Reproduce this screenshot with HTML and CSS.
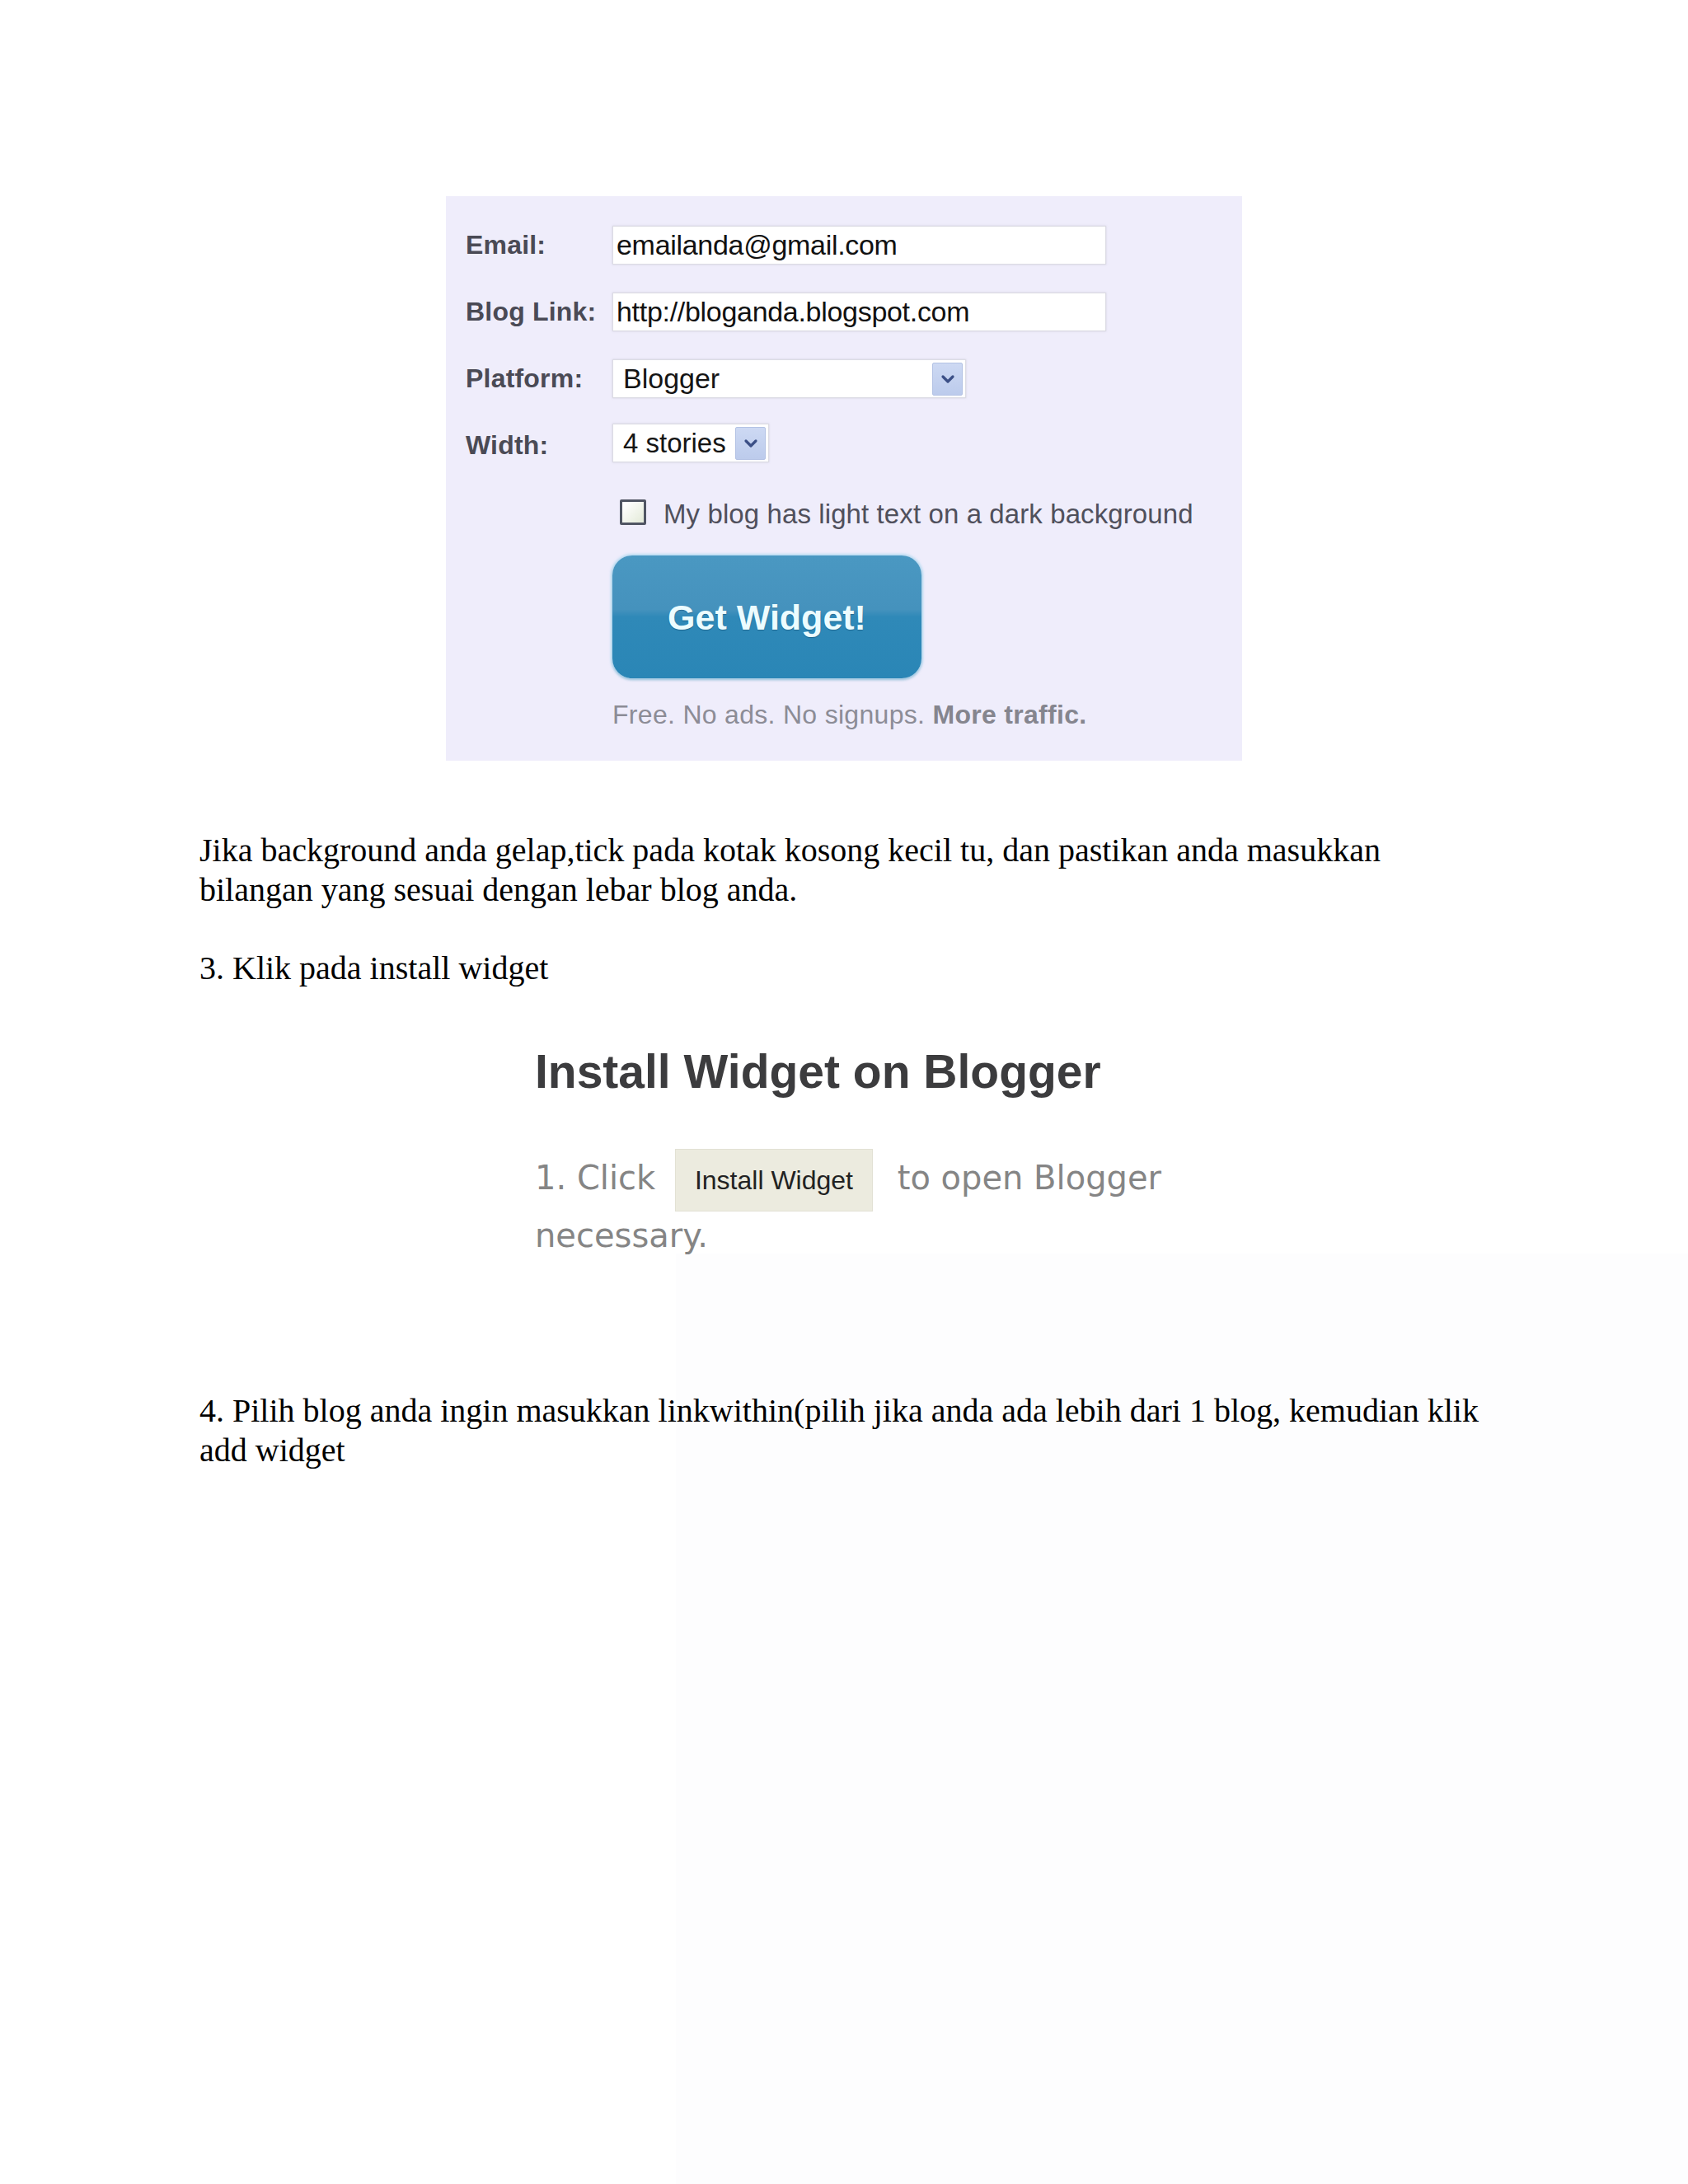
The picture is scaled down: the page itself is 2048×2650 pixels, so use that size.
FILE: index.html
```html
<!DOCTYPE html>
<html lang="id">
<head>
<meta charset="utf-8">
<title>Pasang LinkWithin</title>
<link rel="stylesheet" href="styles.css">
</head>
<body>
<div class="page">

  <figure class="shot shot-form">
    <div class="lw-form">
      <div class="row">
        <span class="label">Email:</span>
        <span class="field field-wide">emailanda@gmail.com</span>
      </div>
      <div class="row">
        <span class="label">Blog Link:</span>
        <span class="field field-wide">http://bloganda.blogspot.com</span>
      </div>
      <div class="row">
        <span class="label">Platform:</span>
        <span class="select select-platform">
          <span class="select-text">Blogger</span>
          <span class="select-arrow"><svg viewBox="0 0 20 20" width="20" height="20"><path d="M4 7 L10 13 L16 7" fill="none" stroke="#3b4f86" stroke-width="3.2" stroke-linecap="round" stroke-linejoin="round"/></svg></span>
        </span>
      </div>
      <div class="row">
        <span class="label">Width:</span>
        <span class="select select-width">
          <span class="select-text">4 stories</span>
          <span class="select-arrow"><svg viewBox="0 0 20 20" width="20" height="20"><path d="M4 7 L10 13 L16 7" fill="none" stroke="#3b4f86" stroke-width="3.2" stroke-linecap="round" stroke-linejoin="round"/></svg></span>
        </span>
      </div>
      <div class="row row-check">
        <span class="checkbox"></span>
        <span class="check-label">My blog has light text on a dark background</span>
      </div>
      <div class="row row-button">
        <span class="get-btn">Get Widget!</span>
      </div>
      <p class="tagline">Free. No ads. No signups. <b>More traffic.</b></p>
    </div>
  </figure>

  <p class="text">Jika background anda gelap,tick pada kotak kosong kecil tu, dan pastikan anda masukkan<br>bilangan yang sesuai dengan lebar blog anda.</p>

  <p class="text">3. Klik pada install widget</p>

  <figure class="shot shot-install">
    <h2 class="install-title">Install Widget on Blogger</h2>
    <p class="install-step">1. Click <span class="install-btn">Install Widget</span> to open Blogger<br>necessary.</p>
  </figure>

  <p class="text text-step4">4. Pilih blog anda ingin masukkan linkwithin(pilih jika anda ada lebih dari 1 blog, kemudian klik<br>add widget</p>

</div>
</body>
</html>
```

FILE: styles.css
```css
html, body {
  margin: 0;
  padding: 0;
  background: #ffffff;
}

.page {
  width: 2048px;
  min-height: 2650px;
  box-sizing: border-box;
  padding: 238px 242px 0 242px;
  font-family: "Liberation Serif", "Times New Roman", serif;
  color: #000;
  /* faint grey wash left over from the pasted screenshot */
  background:
    linear-gradient(#fdfdfe, #fdfdfe) no-repeat 820px 1521px / 1228px 1129px,
    #ffffff;
}

.shot {
  margin: 0;
}

/* ---------- LinkWithin sign-up form ---------- */
.shot-form {
  width: 966px;
  margin: 0 auto;
  background: #efedfb;
}

.lw-form {
  display: flex;
  flex-direction: column;
  padding: 36px 24px 36px 24px;
  font-family: "Liberation Sans", Arial, sans-serif;
}

.row {
  display: flex;
  align-items: center;
  height: 47px;
  margin-bottom: 34px;
}

.label {
  width: 178px;
  flex: none;
  font-weight: bold;
  font-size: 32px;
  color: #4a4a55;
  letter-spacing: 0.2px;
}

.field {
  box-sizing: border-box;
  height: 47px;
  display: flex;
  align-items: center;
  padding-left: 4px;
  background: #ffffff;
  border: 1px solid #dcdce4;
  box-shadow: 0 0 2px rgba(180, 180, 200, 0.6);
  font-size: 34px;
  color: #111;
  letter-spacing: -0.3px;
}

.field-wide {
  width: 599px;
}

.select {
  box-sizing: border-box;
  height: 47px;
  display: flex;
  align-items: center;
  justify-content: space-between;
  padding: 0 3px 0 12px;
  background: #ffffff;
  border: 1px solid #dcdce4;
  box-shadow: 0 0 2px rgba(180, 180, 200, 0.6);
}

.select-platform { width: 429px; }
.select-width { width: 190px; margin-top: -6px; }

.select-text {
  font-size: 34px;
  color: #151515;
}

.select-width .select-text { font-size: 33px; }

.select-arrow {
  width: 37px;
  height: 40px;
  box-sizing: border-box;
  display: flex;
  align-items: center;
  justify-content: center;
  background: linear-gradient(#cdd9f3, #bccbec);
  border: 1px solid #b3c2e4;
  border-radius: 2px;
}

.row-check {
  margin-top: 10px;
  height: 32px;
  margin-bottom: 34px;
  padding-left: 187px;
}

.checkbox {
  width: 32px;
  height: 31px;
  box-sizing: border-box;
  border: 3px solid #505563;
  border-radius: 2px;
  background: linear-gradient(135deg, #ffffff 10%, #e6ecdc 90%);
  margin-right: 21px;
  margin-top: -5px;
}

.check-label {
  font-size: 33px;
  color: #50505c;
  letter-spacing: 0.1px;
}

.row-button {
  height: auto;
  padding-left: 178px;
  margin-bottom: 24px;
}

.get-btn {
  width: 375px;
  height: 149px;
  box-sizing: border-box;
  display: flex;
  align-items: center;
  justify-content: center;
  padding-top: 2px;
  border-radius: 24px;
  background: linear-gradient(#4a98c2 0%, #4592bd 44%, #2f89b8 50%, #2a86b6 100%);
  box-shadow: 0 0 3px 2px rgba(140, 205, 235, 0.55), 0 2px 3px rgba(60, 110, 140, 0.35);
  font-weight: bold;
  font-size: 43px;
  color: #ecfcff;
  text-shadow: 0 1px 1px rgba(10, 60, 90, 0.45);
}

.tagline {
  margin: 0;
  padding-left: 178px;
  font-size: 32px;
  line-height: 40px;
  color: #8c8c96;
  letter-spacing: 0.3px;
}

.tagline b {
  color: #85858e;
}

/* ---------- body text ---------- */
.text {
  margin: 0;
  font-size: 40px;
  line-height: 47.5px;
}

.shot-form + .text {
  margin-top: 85px;
}

.text + .text {
  margin-top: 47.5px;
}

/* ---------- Install widget screenshot ---------- */
.shot-install {
  margin: 67px 0 0 407px;
  font-family: "DejaVu Sans", Verdana, sans-serif;
}

.install-title {
  margin: 0;
  font-family: "Liberation Sans", Arial, sans-serif;
  font-weight: bold;
  font-size: 57px;
  line-height: 70px;
  color: #3c3c3e;
}

.install-step {
  margin: 59px 0 0 0;
  font-size: 40px;
  font-weight: normal;
  line-height: 58px;
  color: #858585;
}

.install-btn {
  display: inline-block;
  margin: 0 17px 0 11px;
  padding: 0 23px;
  height: 74px;
  line-height: 74px;
  vertical-align: middle;
  background: #ecebdf;
  border: 1px solid #e2e1d4;
  font-family: "Liberation Sans", Arial, sans-serif;
  font-weight: normal;
  font-size: 32px;
  color: #222;
}

.text-step4 {
  margin-top: 160px;
}
```
